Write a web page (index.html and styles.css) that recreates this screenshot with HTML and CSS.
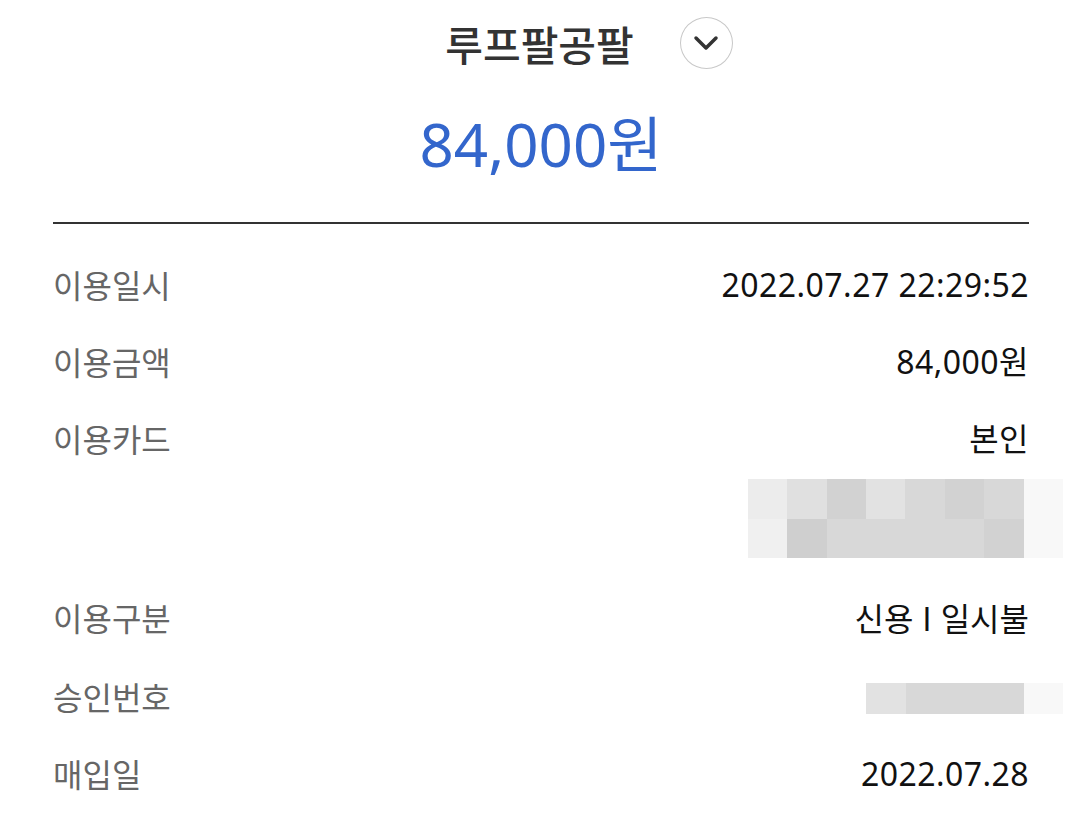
FILE: index.html
```html
<!DOCTYPE html>
<html lang="ko">
<head>
    <meta charset="UTF-8">
    <meta name="viewport" content="width=device-width, initial-scale=1.0">
    <title>이용내역 상세</title>
    <link rel="stylesheet" href="styles.css">
</head>
<body>

<div class="detail">
    <div class="merchant">
        <span class="merchant-name">루프팔공팔</span>
        <button class="toggle-button" type="button">
            <svg width="26" height="16" viewBox="0 0 26 16">
                <path d="M3 3 L13 13 L23 3" fill="none" stroke="#333" stroke-width="3.5" stroke-linecap="round" stroke-linejoin="round"/>
            </svg>
        </button>
    </div>
    <div class="amount">84,000원</div>

    <div class="info">
        <div class="row">
            <div class="label">이용일시</div>
            <div class="value">2022.07.27 22:29:52</div>
        </div>
        <div class="row">
            <div class="label">이용금액</div>
            <div class="value">84,000원</div>
        </div>
        <div class="row card-row">
            <div class="label">이용카드</div>
            <div class="value">
                <div>본인</div>
                <!-- card number hidden -->
                <div class="mosaic card-mosaic">
                    <i class="s2"></i><i class="s4"></i><i class="s6"></i><i class="s3"></i><i class="s5"></i><i class="s6"></i><i class="s5"></i><i class="s0"></i>
                    <i class="s1"></i><i class="s7"></i><i class="s5"></i><i class="s5"></i><i class="s5"></i><i class="s5"></i><i class="s6"></i><i class="s0"></i>
                </div>
            </div>
        </div>
        <div class="row">
            <div class="label">이용구분</div>
            <div class="value value-kr">신용 I 일시불</div>
        </div>
        <div class="row approval-row">
            <div class="label">승인번호</div>
            <div class="value">
                <!-- approval number hidden -->
                <div class="mosaic approval-mosaic">
                    <i class="s3"></i><i class="s5"></i><i class="s5"></i><i class="s5"></i><i class="s0"></i>
                </div>
            </div>
        </div>
        <div class="row">
            <div class="label">매입일</div>
            <div class="value">2022.07.28</div>
        </div>
    </div>
</div>

</body>
</html>
```

FILE: styles.css
```css
body {
    margin: 0;
    padding: 0;
    background-color: #fff;
    font-family: "Noto Sans", "Noto Sans CJK KR", sans-serif;
}

.detail {
    padding: 10px 51px 0 53px;
}

.merchant {
    display: flex;
    justify-content: center;
    align-items: center;
    gap: 46px;
    padding-left: 96px;
    height: 66px;
}

.merchant-name {
    font-family: "Noto Sans CJK KR", sans-serif;
    font-size: 41px;
    font-weight: 500;
    color: #333;
}

.toggle-button {
    width: 53px;
    height: 52px;
    border-radius: 50%;
    border: 1.5px solid #c8c8c8;
    background-color: #fff;
    padding: 0;
    display: flex;
    align-items: center;
    justify-content: center;
}

.amount {
    text-align: center;
    font-size: 60px;
    color: #3366cc;
    line-height: 1;
    padding: 38px 0 48px;
    border-bottom: 2px solid #333;
}

.info {
    padding-top: 22px;
}

.row {
    display: flex;
    justify-content: space-between;
    align-items: flex-start;
    line-height: 77px;
}

.label {
    font-family: "Noto Sans CJK KR", sans-serif;
    font-size: 32px;
    color: #666;
}

.value {
    font-size: 32px;
    letter-spacing: 0.45px;
    color: #111;
    text-align: right;
}

.value-kr {
    font-family: "Noto Sans CJK KR", sans-serif;
    letter-spacing: 0;
}

.card-row .value {
    display: flex;
    flex-direction: column;
    align-items: flex-end;
}

.approval-row {
    margin-top: 2px;
}

.mosaic {
    display: grid;
    grid-auto-rows: 39.5px;
    grid-template-columns: repeat(8, 39.4px);
    margin-right: -34px;
}

.card-mosaic {
    margin-top: 2px;
    margin-bottom: 21px;
}

.approval-mosaic {
    grid-template-columns: 40px 40px 39px 39px 39px;
    grid-auto-rows: 31px;
    margin-top: 25px;
}

.mosaic i {
    display: block;
}

.s0 { background-color: #f8f8f8; }
.s1 { background-color: #f0f0f0; }
.s2 { background-color: #ececec; }
.s3 { background-color: #e2e2e2; }
.s4 { background-color: #e0e0e0; }
.s5 { background-color: #d8d8d8; }
.s6 { background-color: #d2d2d2; }
.s7 { background-color: #cfcfcf; }
```
